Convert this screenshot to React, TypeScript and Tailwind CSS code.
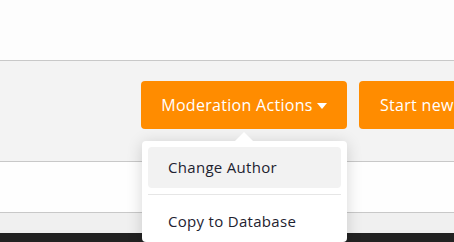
const font = { fontFamily: '"Open Sans", "Liberation Sans", sans-serif' };

const App = () => {
  return (
    <div
      className="relative h-[242px] w-[454px] overflow-hidden bg-[#fdfdfd]"
      style={font}
    >
      <div className="h-[60px] bg-[#fdfdfd]" />

      <div className="h-[102px] border-y border-[#c8c8c8] bg-[#f3f3f3]">
        <div className="flex gap-3 whitespace-nowrap pl-[141px] pt-[20px]">
          <button className="flex h-[48px] w-[206px] shrink-0 items-center justify-center gap-1 rounded-[4px] bg-[#ff8c00] text-[16px] tracking-[0.3px] text-white">
            Moderation Actions
            <svg width="10" height="6" viewBox="0 0 10 6" className="mt-[1px]">
              <path d="M0 0h10L5 6z" fill="white" />
            </svg>
          </button>
          <button className="flex h-[48px] shrink-0 items-center rounded-[4px] bg-[#ff8c00] px-[21px] text-[16px] tracking-[0.3px] text-white">
            Start new Discussion
          </button>
        </div>
      </div>

      <div className="h-[50px] bg-[#fefefe]" />
      <div className="h-[21px] border-t border-[#c8c8c8] bg-[#f0f0f0]" />
      <div className="h-[9px] bg-[#222222]" />

      {/* dropdown menu */}
      <div className="absolute left-[142px] top-[141px] w-[205px] rounded-[4px] bg-white px-[6px] pt-[6px] shadow-[0_2px_16px_rgba(0,0,0,0.16)]">
        <div className="absolute -top-[9px] left-[93px] h-0 w-0 border-x-[9px] border-b-[9px] border-x-transparent border-b-white" />
        <div className="flex h-[41px] items-center rounded-[4px] bg-[#f2f2f2] pl-[20px] text-[15px] tracking-[0.3px] text-[#1e2230]">
          Change Author
        </div>
        <div className="my-[6px] h-px bg-[#e6e6e6]" />
        <div className="flex h-[41px] items-center pl-[20px] text-[15px] tracking-[0.3px] text-[#1e2230]">
          Copy to Database
        </div>
      </div>
    </div>
  );
};

export default App;
